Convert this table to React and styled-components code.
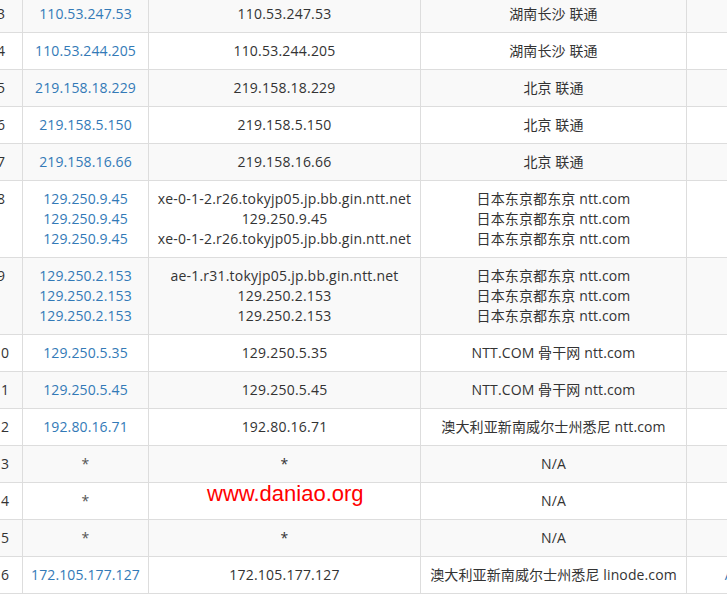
import React from "react";
import styled, { createGlobalStyle } from "styled-components";

const Global = createGlobalStyle`
  html, body { margin: 0; padding: 0; background: #fff; overflow: hidden; }
  body { font-family: "Open Sans", "Noto Sans CJK SC", sans-serif; }
`;

const Page = styled.div`
  position: relative;
  width: 727px;
  height: 600px;
  overflow: hidden;
`;

const Table = styled.div`
  margin-top: -5px;
  margin-left: -20px;
  width: 900px;
  border-top: 1px solid #ddd;
`;

const Row = styled.div`
  display: grid;
  grid-template-columns: 43px 126px 272px 266px 134px;
  background: ${(p) => (p.$striped ? "#f9f9f9" : "#fff")};
  border-bottom: 1px solid #ddd;
`;

const Cell = styled.div`
  box-sizing: border-box;
  padding: 8px 0;
  border-right: 1px solid #ddd;
  text-align: center;
  font-size: 14px;
  line-height: 20px;
  letter-spacing: ${(p) => (p.$wide ? "0.22px" : "0.12px")};
  color: ${(p) => p.$color || "#333"};
  white-space: nowrap;
  overflow: hidden;
  font-family: "Open Sans", "Noto Sans CJK SC", sans-serif;
`;

const Line = styled.div``;

const Watermark = styled.div`
  position: absolute;
  left: 207px;
  top: 483px;
  font-family: "Liberation Sans", Arial, sans-serif;
  font-size: 22px;
  line-height: 22px;
  color: #ff0000;
  background: #fff;
  pointer-events: none;
`;

const rows = [
  { hop: 3, ip: ["110.53.247.53"], host: ["110.53.247.53"], loc: ["湖南长沙 联通"], as: ["AS4837"] },
  { hop: 4, ip: ["110.53.244.205"], host: ["110.53.244.205"], loc: ["湖南长沙 联通"], as: ["AS4837"] },
  { hop: 5, ip: ["219.158.18.229"], host: ["219.158.18.229"], loc: ["北京 联通"], as: ["AS4837"] },
  { hop: 6, ip: ["219.158.5.150"], host: ["219.158.5.150"], loc: ["北京 联通"], as: ["AS4837"] },
  { hop: 7, ip: ["219.158.16.66"], host: ["219.158.16.66"], loc: ["北京 联通"], as: ["AS4837"] },
  {
    hop: 8,
    ip: ["129.250.9.45", "129.250.9.45", "129.250.9.45"],
    host: [
      "xe-0-1-2.r26.tokyjp05.jp.bb.gin.ntt.net",
      "129.250.9.45",
      "xe-0-1-2.r26.tokyjp05.jp.bb.gin.ntt.net",
    ],
    loc: ["日本东京都东京 ntt.com", "日本东京都东京 ntt.com", "日本东京都东京 ntt.com"],
    as: ["AS2914", "AS2914", "AS2914"],
  },
  {
    hop: 9,
    ip: ["129.250.2.153", "129.250.2.153", "129.250.2.153"],
    host: ["ae-1.r31.tokyjp05.jp.bb.gin.ntt.net", "129.250.2.153", "129.250.2.153"],
    loc: ["日本东京都东京 ntt.com", "日本东京都东京 ntt.com", "日本东京都东京 ntt.com"],
    as: ["AS2914", "AS2914", "AS2914"],
  },
  { hop: 10, ip: ["129.250.5.35"], host: ["129.250.5.35"], loc: ["NTT.COM 骨干网 ntt.com"], as: ["AS2914"] },
  { hop: 11, ip: ["129.250.5.45"], host: ["129.250.5.45"], loc: ["NTT.COM 骨干网 ntt.com"], as: ["AS2914"] },
  { hop: 12, ip: ["192.80.16.71"], host: ["192.80.16.71"], loc: ["澳大利亚新南威尔士州悉尼 ntt.com"], as: ["AS2914"] },
  { hop: 13, ip: ["*"], host: ["*"], loc: ["N/A"], as: [""], star: true },
  { hop: 14, ip: ["*"], host: ["*"], loc: ["N/A"], as: [""], star: true },
  { hop: 15, ip: ["*"], host: ["*"], loc: ["N/A"], as: [""], star: true },
  {
    hop: 16,
    ip: ["172.105.177.127"],
    host: ["172.105.177.127"],
    loc: ["澳大利亚新南威尔士州悉尼 linode.com"],
    as: ["AS63949"],
    asBlue: true,
  },
];

const Lines = ({ items }) => items.map((t, i) => <Line key={i}>{t || "\u00a0"}</Line>);

export default function App() {
  return (
    <Page>
      <Global />
      <Table>
        {rows.map((r, i) => (
          <Row key={r.hop} $striped={i % 2 === 0}>
            <Cell>{r.hop}</Cell>
            <Cell $color={r.star ? "#555" : "#337ab7"}>
              <Lines items={r.ip} />
            </Cell>
            <Cell $wide>
              <Lines items={r.host} />
            </Cell>
            <Cell>
              <Lines items={r.loc} />
            </Cell>
            <Cell $color={r.asBlue ? "#337ab7" : "#f5c97a"}>
              <Lines items={r.as} />
            </Cell>
          </Row>
        ))}
      </Table>
      <Watermark>www.daniao.org</Watermark>
    </Page>
  );
}
